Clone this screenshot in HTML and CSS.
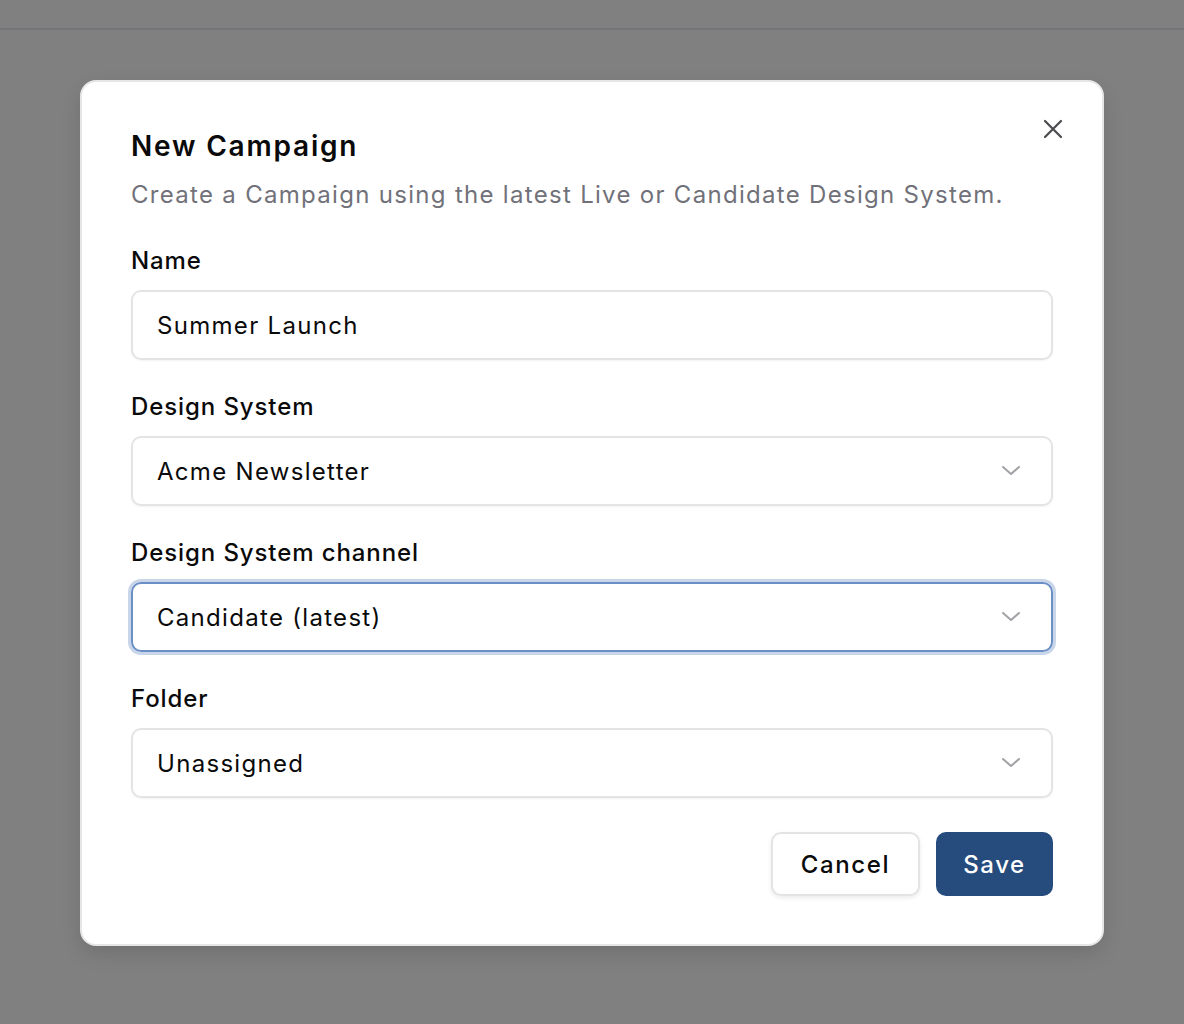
FILE: index.html
```html
<!DOCTYPE html>
<html lang="en">
<head>
<meta charset="utf-8">
<title>New Campaign</title>
<link rel="stylesheet" href="styles.css">
</head>
<body>
<header class="topbar"></header>
<div class="overlay">
  <div class="dialog" role="dialog" aria-labelledby="dlg-title">
    <button class="close" type="button" aria-label="Close">
      <svg width="20" height="20" viewBox="0 0 20 20" fill="none" stroke="currentColor" stroke-width="2.2" stroke-linecap="round">
        <path d="M2 2L18 18M18 2L2 18"/>
      </svg>
    </button>
    <h2 id="dlg-title" class="title">New Campaign</h2>
    <p class="desc">Create a Campaign using the latest Live or Candidate Design System.</p>

    <form class="form">
      <div class="field">
        <label class="label">Name</label>
        <div class="control">Summer Launch</div>
      </div>
      <div class="field">
        <label class="label">Design System</label>
        <div class="control select">
          <span>Acme Newsletter</span>
          <svg class="chev" width="20" height="12" viewBox="0 0 20 12" fill="none" stroke="currentColor" stroke-width="2" stroke-linecap="round" stroke-linejoin="round"><path d="M2 2L10 9L18 2"/></svg>
        </div>
      </div>
      <div class="field">
        <label class="label">Design System channel</label>
        <div class="control select focused">
          <span>Candidate (latest)</span>
          <svg class="chev" width="20" height="12" viewBox="0 0 20 12" fill="none" stroke="currentColor" stroke-width="2" stroke-linecap="round" stroke-linejoin="round"><path d="M2 2L10 9L18 2"/></svg>
        </div>
      </div>
      <div class="field">
        <label class="label">Folder</label>
        <div class="control select">
          <span>Unassigned</span>
          <svg class="chev" width="20" height="12" viewBox="0 0 20 12" fill="none" stroke="currentColor" stroke-width="2" stroke-linecap="round" stroke-linejoin="round"><path d="M2 2L10 9L18 2"/></svg>
        </div>
      </div>
    </form>

    <div class="actions">
      <button class="btn btn-outline" type="button">Cancel</button>
      <button class="btn btn-primary" type="button">Save</button>
    </div>
  </div>
</div>
</body>
</html>
```

FILE: styles.css
```css
* { box-sizing: border-box; }

html, body {
  margin: 0;
  padding: 0;
}

body {
  background: #808080;
  font-family: Inter, "Noto Sans", "Liberation Sans", sans-serif;
  color: #0a0a0a;
  min-height: 1024px;
}

.topbar {
  height: 30px;
  background: #7f807f;
  border-bottom: 2px solid #747479;
}

.overlay {
  display: flex;
  justify-content: center;
  padding-top: 50px;
}

.dialog {
  position: relative;
  width: 1024px;
  background: #ffffff;
  border: 2px solid #e6e6e8;
  border-radius: 16px;
  box-shadow: 0 8px 20px rgba(0, 0, 0, 0.12);
  padding: 49px 49px 48px;
}

.close {
  position: absolute;
  top: 37px;
  right: 39px;
  width: 20px;
  height: 20px;
  padding: 0;
  border: 0;
  background: none;
  color: #4a4a4f;
  display: flex;
}

.title {
  margin: 0;
  font-size: 28px;
  line-height: 30px;
  font-weight: 600;
  letter-spacing: 1.8px;
  color: #0a0a0a;
}

.desc {
  margin: 18px 0 0;
  font-size: 24px;
  line-height: 32px;
  letter-spacing: 1.3px;
  color: #71717a;
}

.form {
  display: flex;
  flex-direction: column;
  gap: 33px;
  margin-top: 36px;
}

.field {
  display: flex;
  flex-direction: column;
  gap: 15px;
}

.label {
  font-size: 24px;
  line-height: 28px;
  font-weight: 500;
  letter-spacing: 0.9px;
  color: #0a0a0a;
}

.control {
  height: 70px;
  border: 2px solid #e4e4e7;
  border-radius: 10px;
  padding: 0 24px;
  display: flex;
  align-items: center;
  justify-content: space-between;
  font-size: 24px;
  letter-spacing: 1.3px;
  color: #0a0a0a;
  box-shadow: 0 1px 2px rgba(0, 0, 0, 0.05);
}

.control.focused {
  border-color: #6a8fc6;
  box-shadow: 0 0 0 3px #c9d6ea;
}

.chev {
  color: #a1a1a6;
  margin-right: 6px;
}

.actions {
  display: flex;
  justify-content: flex-end;
  gap: 16px;
  margin-top: 34px;
}

.btn {
  height: 64px;
  border-radius: 10px;
  font-family: inherit;
  font-size: 24px;
  font-weight: 500;
  letter-spacing: 1.6px;
  padding: 0;
}

.btn-outline {
  background: #ffffff;
  border: 2px solid #e4e4e7;
  color: #0a0a0a;
  box-shadow: 0 2px 4px rgba(0, 0, 0, 0.08);
  width: 149px;
}

.btn-primary {
  background: #264b7d;
  border: 0;
  color: #ffffff;
  width: 117px;
}
```
